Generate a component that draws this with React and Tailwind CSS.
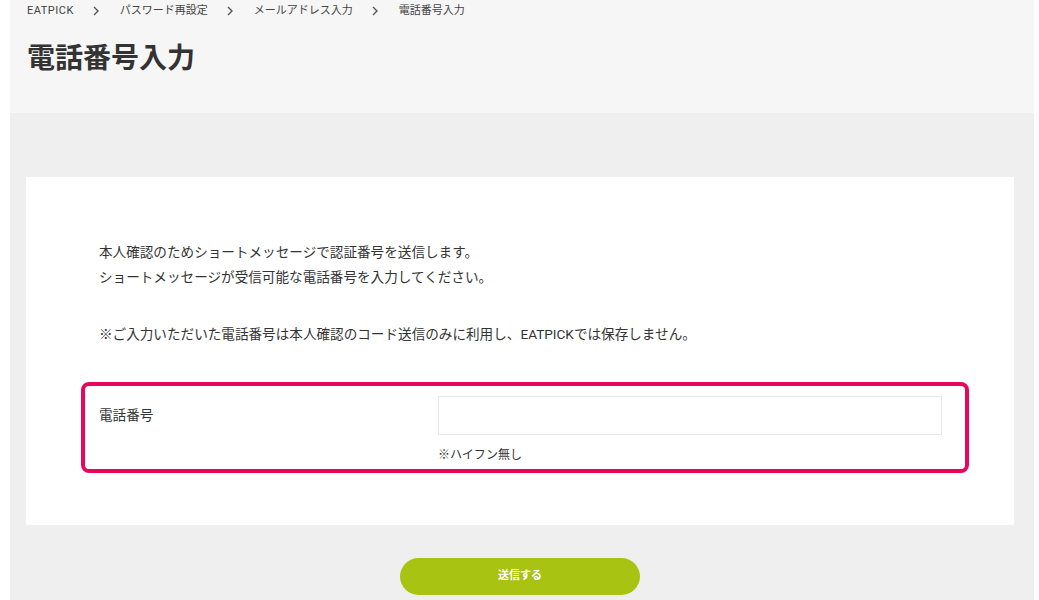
import React, { useState } from "react";

const FONT = "font-['Roboto','Noto_Sans_CJK_JP',sans-serif]";

const Chevron = () => (
  <svg width="8" height="10" viewBox="0 0 8 10" className="ml-[18px] mr-[20px]">
    <polyline points="2,1 6,5 2,9" fill="none" stroke="#555" strokeWidth="1.4" />
  </svg>
);

const App = () => {
  const [phone, setPhone] = useState("");

  const crumbs = ["EATPICK", "パスワード再設定", "メールアドレス入力", "電話番号入力"];

  return (
    <div className={`min-h-screen bg-white ${FONT}`}>
      <div className="ml-[10px] w-[1024px]">

        {/* Header */}
        <header className="h-[113px] bg-[#f6f6f6] px-[17px] pt-[4px]">
          <nav className="flex items-center h-[14px] text-[11px] text-[#444]">
            {crumbs.map((c, i) => (
              <React.Fragment key={c}>
                {i > 0 && <Chevron />}
                <span className={i === 0 ? "tracking-[0.5px]" : ""}>{c}</span>
              </React.Fragment>
            ))}
          </nav>
          <h1 className="mt-[21px] text-[28px] leading-[40px] font-bold text-[#333]">
            電話番号入力
          </h1>
        </header>

        {/* Main */}
        <main className="bg-[#efefef] pt-[64px] pl-[16px] pr-[20px] pb-[40px]">
          <section className="bg-white pt-[63px] pb-[52px] pl-[55px] pr-[45px]">
            <div className="pl-[18px] text-[13.6px] leading-[25px] text-[#333]">
              <p>本人確認のためショートメッセージで認証番号を送信します。</p>
              <p>ショートメッセージが受信可能な電話番号を入力してください。</p>
              <p className="mt-[32px]">
                ※ご入力いただいた電話番号は本人確認のコード送信のみに利用し、EATPICKでは保存しません。
              </p>
            </div>

            <div className="mt-[35px] flex rounded-[8px] border-4 border-[#e8065c] pl-[14px] pr-[23px] pt-[10px] pb-[4px]">
              <label className="w-[339px] pt-[9px] text-[13.6px] leading-[20px] text-[#333]">
                電話番号
              </label>
              <div className="flex-1">
                <input
                  type="tel"
                  value={phone}
                  onChange={(e) => setPhone(e.target.value)}
                  className="block w-full h-[39px] border border-[#e8e8e8] bg-white px-3 text-[13px] outline-none"
                />
                <p className="mt-[10px] text-[12px] leading-[20px] text-[#333]">※ハイフン無し</p>
              </div>
            </div>
          </section>

          <div className="flex justify-center pt-[33px]">
            <button className="w-[240px] h-[37px] rounded-full bg-[#a9c312] text-white text-[11px] font-bold">
              送信する
            </button>
          </div>
        </main>

      </div>
    </div>
  );
};

export default App;
